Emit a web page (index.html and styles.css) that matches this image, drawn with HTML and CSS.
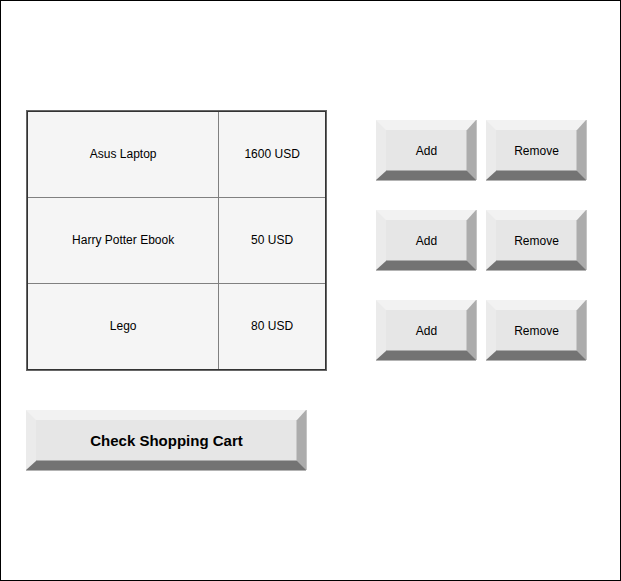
FILE: index.html
```html
<!DOCTYPE html>
<html lang="en">
<head>
<meta charset="utf-8">
<title>Shop</title>
<link rel="stylesheet" href="styles.css">
</head>
<body>
<main class="page">
  <div class="shop">
    <div class="table-frame">
      <table class="products">
        <tr><td class="name">Asus Laptop</td><td class="price">1600 USD</td></tr>
        <tr><td class="name">Harry Potter Ebook</td><td class="price">50 USD</td></tr>
        <tr><td class="name">Lego</td><td class="price">80 USD</td></tr>
      </table>
    </div>
    <div class="actions">
      <button class="bevel" type="button">Add</button>
      <button class="bevel" type="button">Remove</button>
      <button class="bevel" type="button">Add</button>
      <button class="bevel" type="button">Remove</button>
      <button class="bevel" type="button">Add</button>
      <button class="bevel" type="button">Remove</button>
    </div>
  </div>
  <button class="bevel checkout" type="button">Check Shopping Cart</button>
</main>
</body>
</html>
```
FILE: styles.css
```css
* {
  box-sizing: border-box;
}

body {
  margin: 0;
  background: #fff;
  color: #000;
  font: 12px/14px "Liberation Sans", Arial, sans-serif;
}

.page {
  min-height: 100vh;
  padding: 109px 34px 40px 25px;
  border: 1px solid #000;
}

.shop {
  display: grid;
  grid-template-columns: 301fr 210fr;
  gap: 49px;
}

.table-frame {
  border: 1px solid #666;
}

.products {
  width: 100%;
  border: 1px solid #333;
  border-spacing: 0;
  background: #f5f5f5;
  table-layout: fixed;
}

.products td {
  height: 86px;
  padding: 0 0 2px;
  border-bottom: 1px solid #808080;
  text-align: center;
}

.products tr:last-child td {
  height: 85px;
  border-bottom: 0;
}

.products .name {
  width: 64.4%;
  border-right: 1px solid #808080;
}

.actions {
  display: grid;
  grid-template-columns: 1fr 1fr;
  align-content: start;
  gap: 30px 10px;
  padding-top: 10px;
}

.bevel {
  height: 60px;
  padding: 1px 0 0;
  border: solid;
  border-width: 10px 9px 9px 10px;
  border-color: #f2f2f2 #acacac #737373 #ebebeb;
  border-radius: 0;
  background: #e6e6e6;
  box-shadow: inset 0 -1px #acacac, inset -1px 0 #c9c9c9, 0 1px #b3b3b3, 1px 0 #c4c4c4;
  color: #000;
  font: inherit;
}

.checkout {
  display: block;
  width: 280px;
  margin-top: 39px;
  font-size: 15px;
  font-weight: bold;
}
```
